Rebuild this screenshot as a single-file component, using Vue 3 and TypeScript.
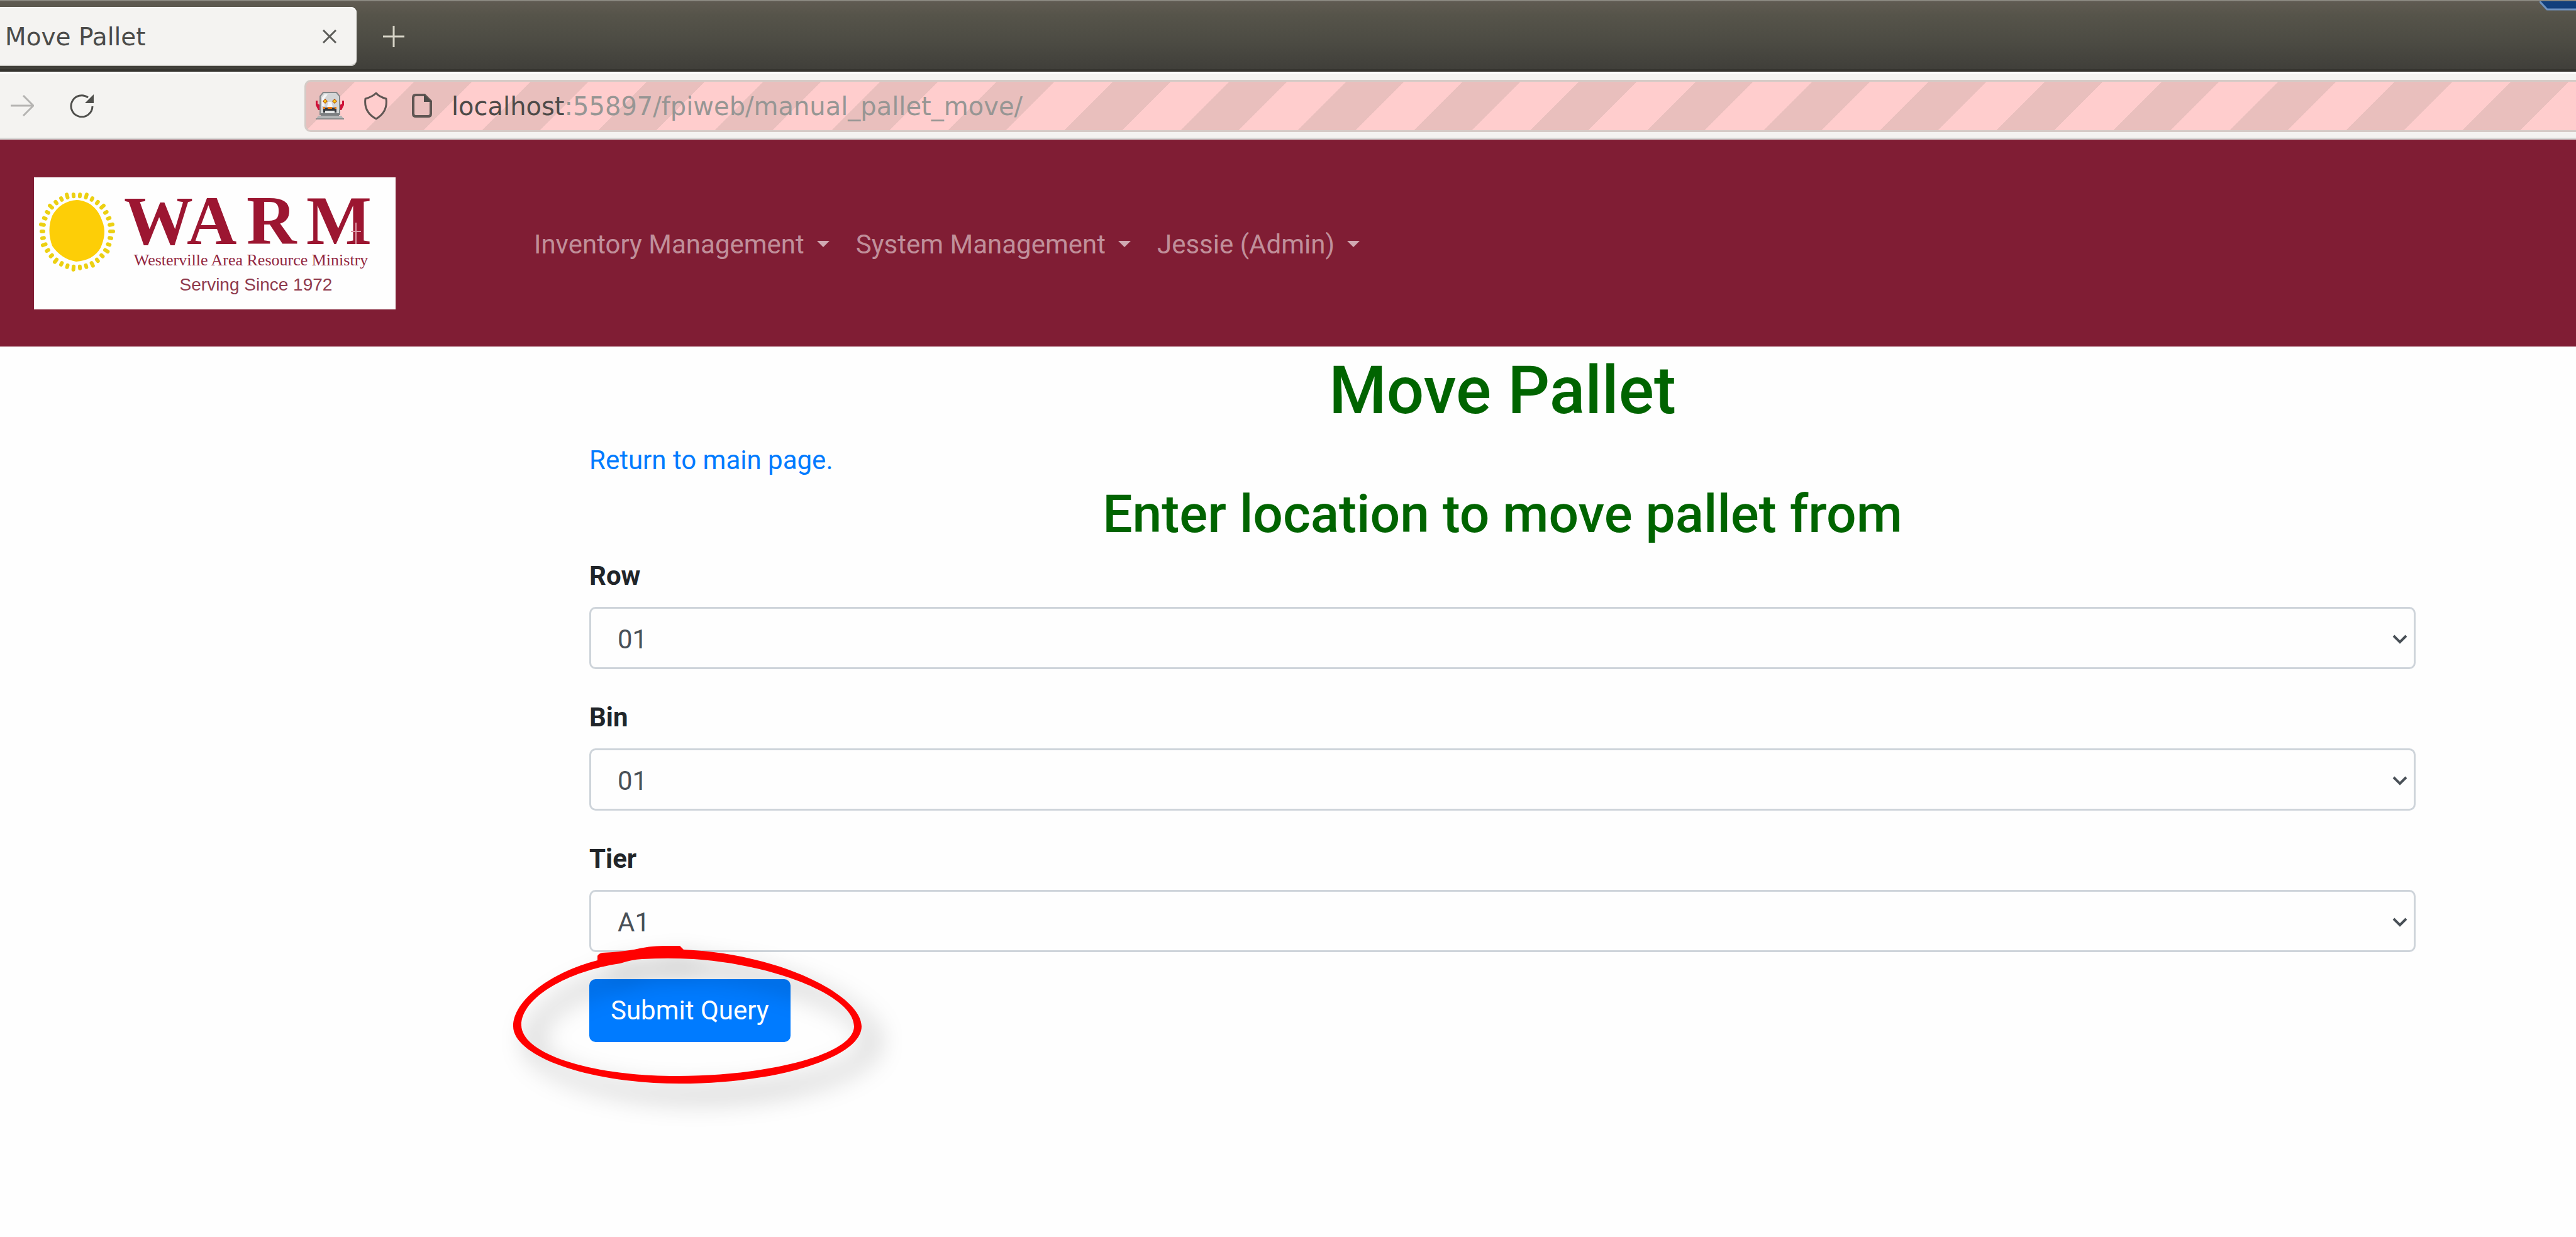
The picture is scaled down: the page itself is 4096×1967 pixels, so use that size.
<script setup lang="ts">
import { ref } from 'vue'

interface Field {
  id: string
  label: string
  options: string[]
}

const menus: string[] = ['Inventory Management', 'System Management', 'Jessie (Admin)']

const fields: Field[] = [
  { id: 'row', label: 'Row', options: ['01', '02', '03', '04'] },
  { id: 'bin', label: 'Bin', options: ['01', '02', '03', '04'] },
  { id: 'tier', label: 'Tier', options: ['A1', 'A2', 'B1', 'B2', 'C1', 'C2'] },
]

const values = ref<Record<string, string>>({ row: '01', bin: '01', tier: 'A1' })

const rays = Array.from({ length: 34 }, (_, i) => {
  const a = (i / 34) * Math.PI * 2
  const long = i % 3 === 0 ? 2 : 0
  return {
    x1: 68 + Math.cos(a) * 53,
    y1: 86 + Math.sin(a) * 56,
    x2: 68 + Math.cos(a) * (56 + long),
    y2: 86 + Math.sin(a) * (59 + long),
  }
})
</script>

<template>
  <div class="window">
    <div class="tabstrip">
      <div class="tab">
        <span class="tab-title">Move Pallet</span>
        <button class="icon-btn" type="button" aria-label="Close tab">
          <svg width="24" height="24" viewBox="0 0 24 24"><path d="M2 2 22 22M22 2 2 22" stroke="#5b5b58" stroke-width="3" fill="none" /></svg>
        </button>
      </div>
      <button class="icon-btn new-tab" type="button" aria-label="New tab">
        <svg width="34" height="34" viewBox="0 0 34 34"><path d="M17 0V34M0 17H34" stroke="#d6d3c6" stroke-width="3" fill="none" /></svg>
      </button>
      <svg class="corner" width="58" height="15" viewBox="0 0 58 15">
        <path d="M0 0 12 13H58V0Z" fill="#123f7c" />
        <path d="M0 0 12 13H58" fill="none" stroke="#6e92c0" stroke-width="3" />
      </svg>
    </div>

    <div class="toolbar">
      <button class="icon-btn" type="button" aria-label="Forward">
        <svg width="37" height="34" viewBox="0 0 37 34"><path d="M0 17H35M20 1 36 17 20 33" stroke="#b5b4b2" stroke-width="3" fill="none" /></svg>
      </button>
      <button class="icon-btn reload" type="button" aria-label="Reload">
        <svg width="38" height="38" viewBox="0 0 38 38">
          <path d="M36 20A17 17 0 1 1 29 6" stroke="#4f4f4c" stroke-width="3" fill="none" />
          <path d="M38 1V15H24Z" fill="#4f4f4c" />
        </svg>
      </button>
      <div class="urlbar">
        <svg width="45" height="44" viewBox="0 0 45 44">
          <path d="M0 14h3v5l4 2v8H4l-4-8zM45 14h-3v5l-4 2v8h3l4-8z" fill="#cf1038" />
          <path d="M12 1h21l5 6v29H7V7z" fill="#d3d5d6" stroke="#85888a" stroke-width="2" />
          <path d="M10 9 14 4h5l-5 7v12h-4z" fill="#f4f5f5" />
          <path d="M20 16h5l2 8h-9z" fill="#f6f6f6" />
          <path d="M15 11l4 4-4 4-4-4zM30 11l4 4-4 4-4-4z" fill="#b4580c" />
          <circle cx="15" cy="15" r="2" fill="#ffcf10" />
          <circle cx="30" cy="15" r="2" fill="#ffcf10" />
          <path d="M12 25h21v8H12z" fill="#33383c" />
          <path d="M12 24h3v3h-3zM19 24h7v3h-7zM30 24h3v3h-3z" fill="#f07c12" />
          <path d="M15 30h15v4H15z" fill="#e4e6e7" />
          <path d="M8 34h29v4H8z" fill="#7c7f81" />
          <path d="M4 38h37l4 6H0z" fill="#b3b5b6" />
          <path d="M0 42h45v2H0z" fill="#8b8d8e" />
        </svg>
        <svg class="shield" width="39" height="45" viewBox="0 0 39 45">
          <path d="M20 2C24 7 29 9 36 11C38 26 32 36 20 43C7 36 1 26 3 11C10 9 15 7 20 2Z" fill="none" stroke="#5f5653" stroke-width="3" stroke-linejoin="round" />
        </svg>
        <svg class="page-icon" width="32" height="38" viewBox="0 0 32 38">
          <path d="M6 2H20L30 12V32Q30 36 26 36H6Q2 36 2 32V6Q2 2 6 2Z" fill="none" stroke="#5f5653" stroke-width="4" />
          <path d="M19 1 31 13H19Z" fill="#4c4b48" />
        </svg>
        <span class="url"><span class="host">localhost</span>:55897/fpiweb/manual_pallet_move/</span>
      </div>
    </div>

    <header class="navbar">
      <a class="brand" href="#" aria-label="WARM home">
        <svg width="575" height="210" viewBox="0 0 575 210">
          <rect width="575" height="210" fill="#fefefe" />
          <line v-for="(r, i) in rays" :key="i" :x1="r.x1" :y1="r.y1" :x2="r.x2" :y2="r.y2" stroke="#ecd012" stroke-width="6" stroke-linecap="round" />
          <path d="M68 36C88 37 102 50 108 68C115 84 112 98 106 112C98 126 84 133 67 134C50 131 38 122 29 109C23 93 23 76 29 61C37 46 51 37 68 36Z" fill="#fdce07" />
          <text class="logo-name" x="143 243 338 433" y="106">WARM</text>
          <text class="logo-full" x="345" y="140">Westerville Area Resource Ministry</text>
          <text class="logo-since" x="353" y="180">Serving Since 1972</text>
          <path d="M512 72V106M504 86H520" stroke="#dd9aa8" stroke-width="2" />
        </svg>
      </a>
      <nav class="menus">
        <a v-for="m in menus" :key="m" class="menu" href="#">{{ m }}<span class="caret"></span></a>
      </nav>
    </header>

    <main class="content">
      <h1>Move Pallet</h1>
      <p class="back"><a href="#">Return to main page.</a></p>
      <h2>Enter location to move pallet from</h2>
      <form @submit.prevent>
        <div class="groups">
          <div v-for="f in fields" :key="f.id">
            <label :for="f.id">{{ f.label }}</label>
            <div class="select-wrap">
              <select :id="f.id" v-model="values[f.id]">
                <option v-for="o in f.options" :key="o" :value="o">{{ o }}</option>
              </select>
              <svg class="chevron" width="24" height="16" viewBox="0 0 24 16"><path d="M2 2 12 12 22 2" fill="none" stroke="#495057" stroke-width="4" /></svg>
            </div>
          </div>
        </div>
        <div class="submit-wrap">
          <button class="submit" type="submit">Submit Query</button>
          <svg class="marker" width="620" height="360" viewBox="0 0 620 360">
            <path
              fill="#ff0000"
              fill-rule="evenodd"
              d="M166 148V141Q168 137 174 136Q200 135 224 131Q248 125 272 125H297L303 131C460 138 586 205 586 253C586 303 451 344 297 344C150 344 32 300 32 253C32 212 90 168 166 148ZM237 146Q278 144 319 146C450 155 574 205 574 253C574 297 440 332 293 332C150 332 45 295 45 251C45 207 120 165 202 153Q220 147 237 146Z"
            />
          </svg>
        </div>
      </form>
    </main>
  </div>
</template>

<style>
body {
  background: #fefefe;
}
</style>

<style scoped>
.window {
  min-height: 100vh;
  font-family: Roboto, 'Liberation Sans', sans-serif;
  font-size: 42px;
  line-height: 63px;
  color: #212529;
}
svg {
  display: block;
  flex: none;
}
.icon-btn {
  border: 0;
  padding: 0;
  background: none;
}
.tabstrip {
  position: relative;
  display: flex;
  align-items: center;
  height: 114px;
  box-sizing: border-box;
  padding-top: 4px;
  border-top: 2px solid #8a8880;
  border-bottom: 4px solid #35342f;
  background: linear-gradient(#605b52, #56544a 20%, #4c4b43 60%, #403f3a);
}
.tab {
  display: flex;
  align-items: center;
  justify-content: space-between;
  width: 567px;
  height: 94px;
  box-sizing: border-box;
  padding: 0 31px 0 8px;
  border-radius: 0 9px 9px 0;
  background: #f4f3f1;
  box-shadow: inset 0 2px #ffffff, inset 0 -2px #c9c8c4;
}
.tab-title {
  font-family: 'DejaVu Sans', sans-serif;
  font-size: 39px;
  color: #4b4b49;
}
.new-tab {
  margin-left: 42px;
}
.corner {
  position: absolute;
  top: 0;
  right: 0;
}
.toolbar {
  display: flex;
  align-items: center;
  height: 108px;
  box-sizing: border-box;
  padding-left: 17px;
  border-top: 3px solid #ffffff;
  border-bottom: 3px solid #d9dad8;
  background: #f4f3f1;
}
.reload {
  margin-left: 57px;
}
.urlbar {
  display: flex;
  align-items: center;
  flex: 1;
  height: 83px;
  box-sizing: border-box;
  margin-left: 335px;
  padding-left: 15px;
  border: 3px solid #d5cbc7;
  border-right: 0;
  border-radius: 10px 0 0 10px;
  background: repeating-linear-gradient(135deg, #e9bfbd 0 55px, #ffcdcd 55px 121px, #e9bfbd 121px 131px);
}
.shield {
  margin-left: 31px;
}
.page-icon {
  margin-left: 38px;
}
.url {
  margin-left: 31px;
  padding-top: 2px;
  font-family: 'DejaVu Sans', sans-serif;
  font-size: 40px;
  color: #979694;
}
.host {
  color: #4d4a48;
}
.navbar {
  display: flex;
  align-items: center;
  padding: 60px 54px 59px;
  background: #801d34;
}
.menus {
  display: flex;
  margin-left: 199px;
  padding-top: 2px;
}
.menu {
  padding: 0 21px;
  color: #c08f9a;
  text-decoration: none;
  white-space: nowrap;
}
.caret {
  display: inline-block;
  margin-left: 20px;
  vertical-align: 10px;
  border: 10px solid transparent;
  border-top-color: #d0a9b2;
  border-bottom: 0;
}
.logo-name {
  font-family: 'Liberation Serif', serif;
  font-size: 110px;
  font-weight: 700;
  fill: #9c1631;
}
.logo-full {
  font-family: 'Liberation Serif', serif;
  font-size: 26px;
  text-anchor: middle;
  fill: #92263f;
}
.logo-since {
  font-family: 'Liberation Sans', sans-serif;
  font-size: 28px;
  text-anchor: middle;
  fill: #8f3a4d;
}
.content {
  margin: 0 255px 0 937px;
  padding-top: 8px;
}
h1,
h2 {
  margin: 0;
  font-weight: 500;
  text-align: center;
  color: #006400;
}
h1 {
  font-size: 105px;
  line-height: 126px;
}
h2 {
  font-size: 84px;
  line-height: 101px;
}
.back {
  margin: 15px 0 4px;
}
.back a {
  color: #007bff;
  text-decoration: none;
}
form {
  padding-top: 16px;
}
.groups {
  display: grid;
  gap: 45px;
}
label {
  display: block;
  margin-bottom: 18px;
  font-weight: 700;
}
.select-wrap {
  display: grid;
  align-items: center;
}
select {
  grid-area: 1 / 1;
  width: 100%;
  height: 99px;
  box-sizing: border-box;
  padding: 3px 42px 0;
  border: 3px solid #ced4da;
  border-radius: 10px;
  appearance: none;
  background: #fefefe;
  color: #495057;
  font-family: inherit;
  font-size: 42px;
}
.chevron {
  grid-area: 1 / 1;
  justify-self: end;
  margin: 4px 13px 0 0;
  pointer-events: none;
}
.submit-wrap {
  position: relative;
  display: flex;
  margin-top: 43px;
}
.submit {
  padding: 16px 31px;
  border: 3px solid #007bff;
  border-radius: 10px;
  background: #007bff;
  color: #ffffff;
  font-family: inherit;
  font-size: 42px;
  line-height: 62px;
}
.marker {
  position: absolute;
  top: -178px;
  left: -153px;
  overflow: visible;
  pointer-events: none;
  filter: drop-shadow(24px 24px 20px rgba(0, 0, 0, 0.35));
}
</style>
